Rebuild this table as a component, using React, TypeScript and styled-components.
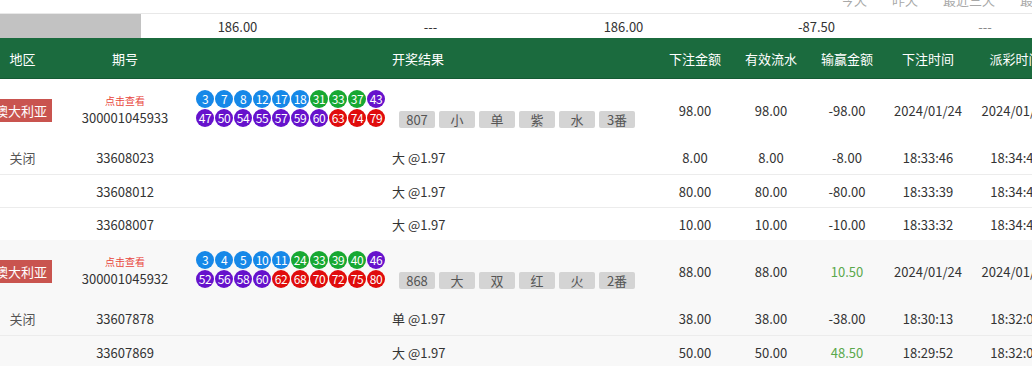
import styled, { createGlobalStyle } from "styled-components";

const GlobalStyle = createGlobalStyle`
  html, body {
    margin: 0;
    padding: 0;
    overflow: hidden;
    background: #ffffff;
  }
  body {
    font-family: "Noto Sans CJK SC", "Noto Sans", sans-serif;
    color: #333333;
  }
`;

type Sub = {
  status?: string;
  issue: string;
  bet: string;
  amount: string;
  valid: string;
  win: string;
  betTime: string;
  payTime: string;
};

type Group = {
  region: string;
  issue: string;
  balls: number[][];
  tags: string[];
  amount: string;
  valid: string;
  win: string;
  betDate: string;
  payDate: string;
  subs: Sub[];
};

const groups: Group[] = [
  {
    region: "澳大利亚",
    issue: "300001045933",
    balls: [
      [3, 7, 8, 12, 17, 18, 31, 33, 37, 43],
      [47, 50, 54, 55, 57, 59, 60, 63, 74, 79],
    ],
    tags: ["807", "小", "单", "紫", "水", "3番"],
    amount: "98.00",
    valid: "98.00",
    win: "-98.00",
    betDate: "2024/01/24",
    payDate: "2024/01/24",
    subs: [
      { status: "关闭", issue: "33608023", bet: "大 @1.97", amount: "8.00", valid: "8.00", win: "-8.00", betTime: "18:33:46", payTime: "18:34:46" },
      { issue: "33608012", bet: "大 @1.97", amount: "80.00", valid: "80.00", win: "-80.00", betTime: "18:33:39", payTime: "18:34:46" },
      { issue: "33608007", bet: "大 @1.97", amount: "10.00", valid: "10.00", win: "-10.00", betTime: "18:33:32", payTime: "18:34:46" },
    ],
  },
  {
    region: "澳大利亚",
    issue: "300001045932",
    balls: [
      [3, 4, 5, 10, 11, 24, 33, 39, 40, 46],
      [52, 56, 58, 60, 62, 68, 70, 72, 75, 80],
    ],
    tags: ["868", "大", "双", "红", "火", "2番"],
    amount: "88.00",
    valid: "88.00",
    win: "10.50",
    betDate: "2024/01/24",
    payDate: "2024/01/24",
    subs: [
      { status: "关闭", issue: "33607878", bet: "单 @1.97", amount: "38.00", valid: "38.00", win: "-38.00", betTime: "18:30:13", payTime: "18:32:01" },
      { issue: "33607869", bet: "大 @1.97", amount: "50.00", valid: "50.00", win: "48.50", betTime: "18:29:52", payTime: "18:32:01" },
    ],
  },
];

const ballColor = (n: number) => {
  if (n <= 20) return "#1688e8";
  if (n <= 40) return "#17a832";
  if (n <= 60) return "#6612cc";
  return "#e00c0c";
};

const headers = ["地区", "期号", "开奖结果", "下注金额", "有效流水", "输赢金额", "下注时间", "派彩时间"];

function App() {
  return (
    <Page>
      <GlobalStyle />
      <TabBar>
        <Tab>今天</Tab>
        <Tab>昨天</Tab>
        <Tab>最近三天</Tab>
        <Tab>最近一周</Tab>
      </TabBar>
      <SummaryRow>
        <SummaryBlank />
        <SummaryCell>186.00</SummaryCell>
        <SummaryCell>---</SummaryCell>
        <SummaryCell>186.00</SummaryCell>
        <SummaryCell>-87.50</SummaryCell>
        <SummaryCell $last>---</SummaryCell>
      </SummaryRow>
      <HeaderRow>
        {headers.map((h, i) => (
          <HeaderCell key={h} $result={i === 2} $issue={i === 1}>
            {h}
          </HeaderCell>
        ))}
      </HeaderRow>
      {groups.map((g, gi) => (
        <GroupBody key={g.issue} $alt={gi % 2 === 1}>
          <MainRow>
            <Cell>
              <RegionBadge>{g.region}</RegionBadge>
            </Cell>
            <IssueCell>
              <ViewLink>点击查看</ViewLink>
              <IssueText>{g.issue}</IssueText>
            </IssueCell>
            <ResultCell>
              <BallBlock>
                {g.balls.map((row, ri) => (
                  <BallRow key={ri}>
                    {row.map((n) => (
                      <Ball key={n} $color={ballColor(n)}>
                        {n}
                      </Ball>
                    ))}
                  </BallRow>
                ))}
              </BallBlock>
              <TagRow>
                {g.tags.map((t) => (
                  <Tag key={t}>{t}</Tag>
                ))}
              </TagRow>
            </ResultCell>
            <Cell>{g.amount}</Cell>
            <Cell>{g.valid}</Cell>
            <Cell $win={!g.win.startsWith("-")}>{g.win}</Cell>
            <Cell>{g.betDate}</Cell>
            <Cell>{g.payDate}</Cell>
          </MainRow>
          {g.subs.map((s, si) => (
            <SubRow key={s.issue} $divider={si > 0}>
              <Cell $muted>{s.status ?? ""}</Cell>
              <IssueCell>{s.issue}</IssueCell>
              <BetCell>{s.bet}</BetCell>
              <Cell>{s.amount}</Cell>
              <Cell>{s.valid}</Cell>
              <Cell $win={!s.win.startsWith("-")}>{s.win}</Cell>
              <Cell>{s.betTime}</Cell>
              <Cell>{s.payTime}</Cell>
            </SubRow>
          ))}
        </GroupBody>
      ))}
    </Page>
  );
}

const COLUMNS = "45px 151px 461px 76px 76px 76px 86px 89px";

const Page = styled.div`
  width: 1060px;
  font-size: 13px;
`;

const TabBar = styled.div`
  display: flex;
  justify-content: flex-end;
  gap: 25px;
  height: 13px;
  margin-right: -12px;
  overflow: hidden;
`;

const Tab = styled.span`
  font-size: 13px;
  line-height: 13px;
  color: #a8a8a8;
  transform: translateY(-7px);
`;

const SummaryRow = styled.div`
  display: grid;
  grid-template-columns: 141px 193px 193px 193px 193px 147px;
  height: 25px;
  border-top: 1px solid #e8e8e8;
  box-sizing: border-box;
`;

const SummaryBlank = styled.div`
  background-color: #c2c2c2;
`;

const SummaryCell = styled.div<{ $last?: boolean }>`
  display: flex;
  align-items: center;
  justify-content: center;
  color: ${(p) => (p.$last ? "#888888" : "#333333")};
  padding-right: ${(p) => (p.$last ? "3px" : "0px")};
`;

const HeaderRow = styled.div`
  display: grid;
  grid-template-columns: ${COLUMNS};
  height: 41px;
  background-color: #1b6b3e;
  border-bottom: 1px solid #145a33;
  box-sizing: border-box;
`;

const HeaderCell = styled.div<{ $result?: boolean; $issue?: boolean }>`
  display: flex;
  align-items: center;
  justify-content: ${(p) => (p.$result ? "flex-start" : "center")};
  padding-left: ${(p) => (p.$result ? "196px" : p.$issue ? "9px" : "0px")};
  color: #ffffff;
  font-size: 13px;
  white-space: nowrap;
`;

const GroupBody = styled.div<{ $alt?: boolean }>`
  background-color: ${(p) => (p.$alt ? "#f8f8f8" : "#ffffff")};
`;

const MainRow = styled.div`
  display: grid;
  grid-template-columns: ${COLUMNS};
  height: 62px;
`;

const SubRow = styled.div<{ $divider?: boolean }>`
  display: grid;
  grid-template-columns: ${COLUMNS};
  height: 33px;
  border-top: ${(p) => (p.$divider ? "1px solid #ececec" : "none")};
  box-sizing: border-box;
`;

const Cell = styled.div<{ $muted?: boolean; $win?: boolean }>`
  display: flex;
  align-items: center;
  justify-content: center;
  white-space: nowrap;
  color: ${(p) => (p.$win ? "#5aa84c" : p.$muted ? "#555555" : "#333333")};
`;

const IssueCell = styled.div`
  display: flex;
  flex-direction: column;
  align-items: center;
  justify-content: center;
  padding-left: 9px;
  white-space: nowrap;
  color: #333333;
`;

const ViewLink = styled.span`
  font-size: 10px;
  line-height: 15px;
  color: #e8453c;
  margin-top: 1px;
`;

const IssueText = styled.span`
  font-size: 13px;
  line-height: 20px;
`;

const RegionBadge = styled.span`
  display: inline-block;
  padding: 0 5px;
  line-height: 23px;
  font-size: 13px;
  color: #ffffff;
  background-color: #c9544f;
  white-space: nowrap;
  margin-left: -3px;
`;

const ResultCell = styled.div`
  display: flex;
  align-items: flex-end;
  align-self: center;
  gap: 14px;
  margin-top: -3px;
`;

const BallBlock = styled.div`
  display: flex;
  flex-direction: column;
  gap: 1px;
`;

const BallRow = styled.div`
  display: flex;
  gap: 1px;
`;

const Ball = styled.span<{ $color: string }>`
  width: 18px;
  height: 18px;
  border-radius: 50%;
  background-color: ${(p) => p.$color};
  color: #ffffff;
  font-size: 12px;
  line-height: 18px;
  text-align: center;
  letter-spacing: -0.5px;
`;

const TagRow = styled.div`
  display: flex;
  gap: 4px;
  margin-bottom: -1px;
`;

const Tag = styled.span`
  width: 36px;
  height: 17px;
  line-height: 17px;
  border-radius: 2px;
  background-color: #d4d4d4;
  color: #555555;
  font-size: 13px;
  text-align: center;
`;

const BetCell = styled.div`
  display: flex;
  align-items: center;
  padding-left: 196px;
  color: #333333;
  white-space: nowrap;
`;

export default App;
